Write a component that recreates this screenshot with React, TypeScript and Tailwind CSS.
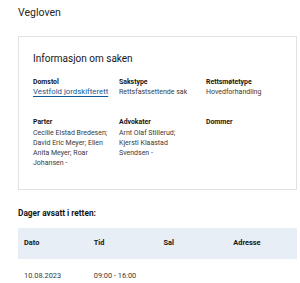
import React from "react";

export default function App() {
  const font = { fontFamily: 'Roboto, "Liberation Sans", Arial, sans-serif' };
  return (
    <div className="w-[300px] h-[283px] bg-white overflow-hidden text-[#161616]" style={font}>
      <div className="pl-[18px] pr-[3px] pt-[5px]">
        <h1 className="text-[10.5px] leading-[16px] font-normal text-[#262626]">Vegloven</h1>
        <div className="mt-[15px] border border-[#dfe3e6] pl-[14px] pr-[10px] pt-[15px] pb-[20px]">
          <h2 className="text-[10px] leading-[14px] font-normal text-[#161616]">Informasjon om saken</h2>
          <div className="mt-[11.5px] grid grid-cols-[86px_87px_1fr] gap-y-[20.5px] text-[7px] leading-[10.3px]">
            <div>
              <div className="font-bold leading-[9px] text-[6.9px]">Domstol</div>
              <div className="mt-[0.5px] text-[7.8px] leading-[10px] text-[#0f5a94] underline underline-offset-[1.5px] decoration-[#0f5a94]">Vestfold jordskifterett</div>
            </div>
            <div>
              <div className="font-bold leading-[9px] text-[6.9px]">Sakstype</div>
              <div className="mt-[0.5px] leading-[10px] text-[#393939]">Rettsfastsettende sak</div>
            </div>
            <div>
              <div className="font-bold leading-[9px] text-[6.9px]">Rettsmøtetype</div>
              <div className="mt-[0.5px] leading-[10px] text-[#393939]">Hovedforhandling</div>
            </div>
            <div>
              <div className="font-bold leading-[9px] text-[6.9px]">Parter</div>
              <div className="mt-[1px] text-[#393939] pr-[2px]">Cecilie Elstad Bredesen; David Eric Meyer; Ellen Anita Meyer; Roar Johansen -</div>
            </div>
            <div>
              <div className="font-bold leading-[9px] text-[6.9px]">Advokater</div>
              <div className="mt-[1px] text-[#393939]">Arnt Olaf Stillerud;<br />Kjersti Klaastad<br />Svendsen -</div>
            </div>
            <div>
              <div className="font-bold leading-[9px] text-[6.9px]">Dommer</div>
            </div>
          </div>
        </div>
        <div className="mt-[18px] text-[8.3px] leading-[10px] font-bold">Dager avsatt i retten:</div>
        <table className="mt-[10px] w-[279px] table-fixed text-[7.4px] leading-[10px]">
          <thead>
            <tr className="bg-[#e8eef5] h-[31px]">
              <th className="text-left font-bold pl-[6px]">Dato</th>
              <th className="text-left font-bold pl-[6px]">Tid</th>
              <th className="text-left font-bold pl-[6px]">Sal</th>
              <th className="text-left font-bold pl-[6px]">Adresse</th>
            </tr>
          </thead>
          <tbody>
            <tr className="h-[34px] text-[#393939]">
              <td className="pl-[6px]">10.08.2023</td>
              <td className="pl-[6px]">09:00 - 16:00</td>
              <td className="pl-[6px]"></td>
              <td className="pl-[6px]"></td>
            </tr>
          </tbody>
        </table>
      </div>
    </div>
  );
}
